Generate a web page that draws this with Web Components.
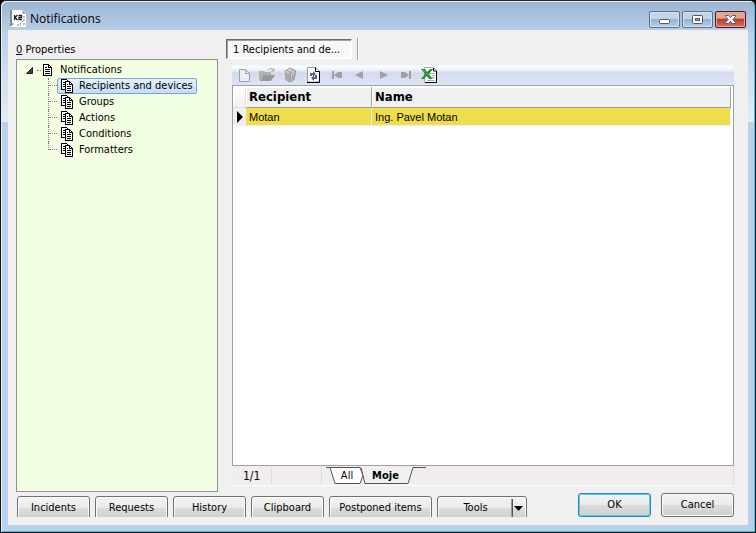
<!DOCTYPE html>
<html lang="en">
<head>
<meta charset="utf-8">
<title>Notifications</title>
<style>
    body {
        margin: 0;
        background: #000;
        color: #000;
        font: 11px/16px "DejaVu Sans Condensed", "Open Sans", sans-serif;
    }
</style>
</head>
<body>
<app-window caption="Notifications">
    <tree-panel slot="side" heading="Properties" hotkey="0">
        <tree-root label="Notifications">
            <tree-item label="Recipients and devices" selected></tree-item>
            <tree-item label="Groups"></tree-item>
            <tree-item label="Actions"></tree-item>
            <tree-item label="Conditions"></tree-item>
            <tree-item label="Formatters"></tree-item>
        </tree-root>
    </tree-panel>
    <page-panel slot="main" tab="1 Recipients and de...">
        <tool-bar></tool-bar>
        <record-grid></record-grid>
        <filter-bar position="1/1"></filter-bar>
    </page-panel>
    <push-button slot="actions">Incidents</push-button>
    <push-button slot="actions">Requests</push-button>
    <push-button slot="actions">History</push-button>
    <push-button slot="actions">Clipboard</push-button>
    <push-button slot="actions" size="wide">Postponed items</push-button>
    <push-button slot="actions" size="menu" menu>Tools</push-button>
    <push-button slot="answers" primary>OK</push-button>
    <push-button slot="answers">Cancel</push-button>
</app-window>

<script>
const ICONS = {
    app: `<svg width="16" height="17" viewBox="0 0 16 17">
        <path d="M1 0h11l4 4v13H1z" fill="#fff"/><path d="M0 0h2v16H0z" fill="#8b8b8b"/>
        <path d="M12 0l4 4h-4z" fill="#ccc"/>
        <path d="M4.500 5v5M7.500 5L5 7.500l2.500 2.500M8.500 5.500h3v2h-2.500v2h3" fill="none" stroke="#222" stroke-width="1.300"/>
        <path d="M14 6v5M13 11l-3 3M2 14h3M7 15h4M13 14h2M13 2l2 2" fill="none" stroke="#777" stroke-dasharray="2 1"/></svg>`,
    page: `<svg width="10" height="12" viewBox="0 0 10 12" shape-rendering="crispEdges">
        <path d="M.5.5h5l3 3v8h-8z" fill="#fff" stroke="#000"/><path d="M5.500 0v3.500H9" fill="none" stroke="#000"/>
        <path d="M2 3.500h2M2 5.500h5M2 7.500h5M2 9.500h5" stroke="#000"/></svg>`,
    pages: `<svg width="13" height="14" viewBox="0 0 13 14" shape-rendering="crispEdges">
        <path d="M.5.5h5l2 2v8h-7z" fill="#fff" stroke="#000"/><path d="M2 3.500h2M2 5.500h2M2 7.500h2" stroke="#000"/>
        <path d="M4.500 2.500h4l3 3v8h-7z" fill="#fff" stroke="#000"/><path d="M8.500 2v3.500H12" fill="none" stroke="#000"/>
        <path d="M6 5.500h1M6 7.500h4M6 9.500h4M6 11.500h4" stroke="#000"/></svg>`,
    create: `<svg width="16" height="16" viewBox="0 0 16 16"><path d="M3.500 2.500h6l4 4v8h-10z" fill="#e9edf6" stroke="#a0a0a0"/>
        <path d="M9.500 2.500v4h4" fill="none" stroke="#a0a0a0"/></svg>`,
    open: `<svg width="16" height="16" viewBox="0 0 16 16"><path d="M0 4h5l1 1h6v3H4l-3 5H0z" fill="#b0b0b0"/>
        <path d="M4 8h12l-4 6H1z" fill="#989898"/><path d="M9 3c2-2 4-2 5 0M15 1v3h-3" fill="none" stroke="#a0a0a0"/></svg>`,
    remove: `<svg width="16" height="16" viewBox="0 0 16 16"><path d="M3 4l5-3 6 3-2 9-4 2-4-2z" fill="#d0d2d8" stroke="#a0a0a0"/>
        <path d="M3 5l5 2v8l-4-2z" fill="#aaa"/><path d="M8 7l6-3M5 3l3 3M11 2L8 6M11 7l-1 6M13 6l-2 7M8.500 7v8" stroke="#999"/></svg>`,
    refresh: `<svg width="16" height="16" viewBox="0 0 16 16"><path d="M2.500.5h8l4 4v10.500h-12z" fill="#fff" stroke="#999"/>
        <path d="M10.500.5v4h4v11H2" fill="none" stroke="#000"/>
        <path d="M5 9V6h3V4l3 3-3 3V8H7v1z" fill="#596389"/>
        <path d="M12 8v4H9v2l-3-3 3-3v2h1V8z" fill="#596389"/></svg>`,
    first: `<svg width="16" height="16" viewBox="0 0 16 16"><path d="M4 4h2v8H4zM6 8l4-3h4v6h-4z" fill="#a0a0a0"/></svg>`,
    prev: `<svg width="16" height="16" viewBox="0 0 16 16"><path d="M4 8l8-4v8z" fill="#a0a0a0"/></svg>`,
    next: `<svg width="16" height="16" viewBox="0 0 16 16"><path d="M14 8L6 4v8z" fill="#a0a0a0"/></svg>`,
    last: `<svg width="16" height="16" viewBox="0 0 16 16"><path d="M14 4h-2v8h2zM12 8L8 5H4v6h4z" fill="#a0a0a0"/></svg>`,
    excel: `<svg width="17" height="16" viewBox="0 0 17 16"><path d="M4.500.5h9l3 3v12h-12z" fill="#fff" stroke="#aaa"/>
        <path d="M13.500 1v3h3v11.500H5" fill="none" stroke="#000"/>
        <path d="M10 6.500h5M12 8.500h3M12 10.500h3M7 13.500h8" stroke="#aaa"/>
        <path d="M1 2h4l2 3 3-3h3L9 7l4 5H9L6.500 9 4 12H1l4-5z" fill="#278b36"/><path d="M3 3l8 8" stroke="#8ccf8e" stroke-dasharray="1 1"/></svg>`,
    minimize: `<svg width="13" height="11" viewBox="0 0 13 11"><rect x="1.500" y="5.500" width="10" height="4" rx="1" fill="#fff" stroke="#535666"/></svg>`,
    maximize: `<svg width="13" height="11" viewBox="0 0 13 11"><rect x="1.500" y="1.500" width="10" height="8" rx="1" fill="#fff" stroke="#535666"/>
        <rect x="4.500" y="4.500" width="4" height="2" fill="#8faccb" stroke="#535666"/></svg>`,
    close: `<svg width="13" height="11" viewBox="0 0 13 11"><path d="M1.500 1.500h3l2 2 2-2h3v1l-2.500 3 2.500 3v1h-3l-2-2-2 2h-3v-1L4 5.500l-2.500-3z" fill="#fff" stroke="#535666"/></svg>`
};

class BaseElement extends HTMLElement {
    constructor() {
        super();
        this.attachShadow({ mode: 'open' });
    }

    connectedCallback() {
        this.shadowRoot.innerHTML = this.render();
    }
}

class AppWindow extends BaseElement {
    render() {
        const caption = this.getAttribute('caption');
        return `
            <style>
                :host {
                    display: flex;
                    flex-direction: column;
                    box-sizing: border-box;
                    min-height: 100vh;
                    padding: 0 7px 7px 7px;
                    border: 1px solid #101318;
                    border-top-color: #2b2226;
                    border-radius: 6px 6px 0 0;
                    background:
                        linear-gradient(#9ab4d1, #b7cfe9) 0 0 / 100% 30px no-repeat,
                        linear-gradient(#b9d1ea, #e2edf8) 0 30px / 100% 91px no-repeat,
                        #b9d1ea;
                    box-shadow: inset 1px 1px #e8f2fb, inset -1px -1px #35c9e8;
                }
                header {
                    display: flex;
                    align-items: center;
                    height: 29px;
                    gap: 4px;
                    padding: 0 2px;
                }
                header svg { flex: none; margin-top: 6px; }
                h1 {
                    flex: 1;
                    margin: 6px 0 0;
                    font: 12px/18px "Open Sans", "Noto Sans", sans-serif;
                }
                .controls { display: flex; gap: 2px; margin: 7px 0 0; }
                .controls button {
                    display: flex;
                    align-items: center;
                    justify-content: center;
                    width: 31px;
                    height: 17px;
                    padding: 0;
                    border: 1px solid #5b6f8e;
                    border-radius: 2px;
                    background: linear-gradient(#c1d4e8 0 45%, #97b2ce 50%, #b8d0e8);
                    box-shadow: inset 0 0 0 1px #d5e3f1;
                }
                .controls svg { margin: 0; }
                .controls .close {
                    border-color: #4b1626;
                    background: linear-gradient(#dfa595 0 40%, #b93d27 50%, #d17660);
                    box-shadow: inset 0 0 0 1px #e2aa9d;
                }
                .client {
                    flex: 1;
                    display: flex;
                    flex-direction: column;
                    background: #f0f0f0;
                }
                main {
                    flex: 1;
                    display: flex;
                    gap: 8px;
                    padding: 0 14px 0 8px;
                }
                slot[name="main"] { display: flex; flex: 1; min-width: 0; }
                footer {
                    display: flex;
                    justify-content: space-between;
                    align-items: flex-start;
                    gap: 8px;
                    height: 33px;
                    padding: 0 14px 0 9px;
                }
                .actions { display: flex; gap: 5px; padding-top: 4px; height: 21px; overflow: hidden; }
                .answers { display: flex; gap: 10px; padding-top: 1px; }
            </style>
            <header>
                ${ICONS.app}
                <h1>${caption}</h1>
                <div class="controls">
                    <button aria-label="Minimize">${ICONS.minimize}</button>
                    <button aria-label="Maximize">${ICONS.maximize}</button>
                    <button class="close" aria-label="Close">${ICONS.close}</button>
                </div>
            </header>
            <div class="client">
                <main>
                    <slot name="side"></slot>
                    <slot name="main"></slot>
                </main>
                <footer>
                    <div class="actions"><slot name="actions"></slot></div>
                    <div class="answers"><slot name="answers"></slot></div>
                </footer>
            </div>
        `;
    }
}

class TreePanel extends BaseElement {
    render() {
        return `
            <style>
                :host { display: flex; flex-direction: column; flex: 0 0 202px; }
                h2 { margin: 0; padding: 12px 0 1px; font: inherit; }
                .box {
                    flex: 1;
                    border: 1px solid #8e9094;
                    background: #f3ffe3;
                    padding: 2px 0 0;
                }
            </style>
            <h2><u>${this.getAttribute('hotkey')}</u> ${this.getAttribute('heading')}</h2>
            <div class="box" role="tree"><slot></slot></div>
        `;
    }
}

class TreeRoot extends BaseElement {
    render() {
        return `
            <style>
                :host { display: block; }
                .row { display: flex; align-items: center; height: 16px; padding-left: 9px; }
                .arrow { flex: none; margin-right: 4px; }
                .dots { width: 4px; border-top: 1px dotted #808080; margin-right: 2px; }
                span { padding-left: 7px; }
                .children { padding-left: 31px; }
            </style>
            <div class="row">
                <svg class="arrow" width="7" height="7" viewBox="0 0 7 7"><path d="M6.500.5v6h-6z" fill="#404040" stroke="#222"/></svg>
                <i class="dots"></i>
                ${ICONS.page}
                <span>${this.getAttribute('label')}</span>
            </div>
            <div class="children" role="group"><slot></slot></div>
        `;
    }
}

class TreeItem extends BaseElement {
    render() {
        return `
            <style>
                :host { display: flex; height: 16px; }
                .line { width: 8px; border-left: 1px dotted #808080; }
                .line::before {
                    content: "";
                    display: block;
                    height: 7px;
                    border-bottom: 1px dotted #808080;
                }
                :host(:last-child) .line { height: 8px; }
                .node {
                    display: flex;
                    align-items: center;
                    box-sizing: border-box;
                    height: 16px;
                    gap: 5px;
                    padding: 0 3px;
                    border: 1px solid transparent;
                    border-radius: 2px;
                }
                :host([selected]) .node {
                    border-color: #7da2ce;
                    background: linear-gradient(#e6f1fc, #c5dcf8);
                }
            </style>
            <i class="line"></i>
            <div class="node" role="treeitem">${ICONS.pages}<span>${this.getAttribute('label')}</span></div>
        `;
    }
}

class PagePanel extends BaseElement {
    render() {
        return `
            <style>
                :host { display: flex; flex-direction: column; flex: 1; min-width: 0; padding-bottom: 6px; }
                .tabs { display: flex; gap: 5px; padding: 8px 0 5px; }
                .tabs button {
                    width: 126px;
                    height: 20px;
                    margin: 1px 0;
                    padding: 1px 0 0 6px;
                    border: 1px solid;
                    border-color: #696969 #fff #fff #696969;
                    box-shadow: inset 1px 1px #a0a0a0;
                    background: repeating-conic-gradient(#fff 0 25%, #f0f0f0 0 50%) 0 0 / 2px 2px;
                    font: inherit;
                    color: inherit;
                    text-align: left;
                    white-space: nowrap;
                }
                .tabs i { width: 1px; background: #a0a0a0; border-right: 1px solid #fff; }
                .content { flex: 1; display: flex; flex-direction: column; padding-left: 6px; }
            </style>
            <div class="tabs"><button role="tab">${this.getAttribute('tab')}</button><i></i></div>
            <div class="content"><slot></slot></div>
        `;
    }
}

class ToolBar extends BaseElement {
    render() {
        const names = ['create', 'open', 'remove', 'refresh', 'first', 'prev', 'next', 'last', 'excel'];
        const buttons = names.map(name => `<button aria-label="${name}">${ICONS[name]}</button>`).join('');
        return `
            <style>
                :host {
                    display: flex;
                    align-items: center;
                    height: 20px;
                    gap: 7px;
                    padding-left: 4px;
                    background: linear-gradient(#f6f9fd 0 15%, #e4eaf6 30%, #d3daee 40%, #dfe5f8);
                }
                button { width: 16px; height: 16px; padding: 0; border: 0; background: none; }
                svg { display: block; }
            </style>
            ${buttons}
        `;
    }
}

class RecordGrid extends BaseElement {
    render() {
        return `
            <style>
                :host {
                    display: block;
                    flex: 1;
                    padding: 1px 2px 0 0;
                    border: 1px solid #a0a0a0;
                    background: #fff;
                }
                table { width: 100%; border-collapse: separate; border-spacing: 0; table-layout: fixed; }
                .mark { width: 13px; }
                .recipient { width: 126px; }
                th {
                    height: 21px;
                    box-sizing: border-box;
                    padding: 0 3px;
                    border-right: 1px solid #a0a0a0;
                    border-bottom: 1px solid #a0a0a0;
                    background: #f0f0f0;
                    box-shadow: inset 1px 1px #fff;
                    font: bold 13px/18px "DejaVu Sans Condensed", sans-serif;
                    text-align: left;
                }
                th.mark { padding: 0; border-color: #e0e0e0; background: linear-gradient(#fff, #f0f0f0); }
                td {
                    height: 18px;
                    box-sizing: border-box;
                    padding: 0 3px;
                    border-right: 1px solid #f0f0f0;
                    border-bottom: 1px solid #f0f0f0;
                    background: #f0dd4c;
                    font: 11px/16px "Liberation Sans", Arial, sans-serif;
                }
                td.mark { padding: 0 0 0 4px; background: #f0f0f0; }
                svg { display: block; }
            </style>
            <table>
                <thead><tr><th class="mark"></th><th class="recipient">Recipient</th><th>Name</th></tr></thead>
                <tbody><tr>
                    <td class="mark"><svg width="6" height="12" viewBox="0 0 6 12"><path d="M0 0l6 6-6 6z"/></svg></td>
                    <td>Motan</td><td>Ing. Pavel Motan</td>
                </tr></tbody>
            </table>
        `;
    }
}

class FilterBar extends BaseElement {
    render() {
        return `
            <style>
                :host {
                    display: flex;
                    height: 18px;
                    padding-top: 1px;
                    border-bottom: 1px solid #fff;
                    border-right: 1px solid #ddd;
                    background: #f0edec;
                }
                .cell { box-sizing: border-box; border-right: 1px solid #ddd; }
                .position { width: 40px; padding-left: 11px; font-size: 12px; line-height: 18px; }
                .empty { width: 50px; }
                .tabs { display: flex; padding-left: 4px; }
                /* the slanted outlines lie behind the captions */
                button {
                    position: relative;
                    height: 17px;
                    padding: 0;
                    border: 0;
                    background: none;
                    font: inherit;
                    color: inherit;
                }
                button svg { position: absolute; left: 0; top: 0; }
                button span { position: relative; }
                .all { width: 34px; padding-left: 8px; }
                .mine { width: 62px; font-weight: bold; padding-right: 11px; }
            </style>
            <div class="cell position">${this.getAttribute('position')}</div>
            <div class="cell empty"></div>
            <div class="tabs">
                <button class="all">
                    <svg width="40" height="17" viewBox="0 0 40 17"><path d="M3.500.5l6 16h24l4-8-3-8z" fill="#fff"/><path d="M0 .5h4l5 16h25l3-8-3-8z" fill="none" stroke="#555"/></svg>
                    <span>All</span>
                </button>
                <button class="mine">
                    <svg width="66" height="17" viewBox="0 0 66 17"><path d="M1 .5h52l-5 16H5z" fill="#f0f0f0"/><path d="M1 .5l4 16h43l5-16h13" fill="none" stroke="#555"/></svg>
                    <span>Moje</span>
                </button>
            </div>
        `;
    }
}

class PushButton extends BaseElement {
    render() {
        const menu = this.hasAttribute('menu')
            ? '<i></i><svg width="9" height="5" viewBox="0 0 9 5"><path d="M0 0h9L4.500 5z"/></svg>'
            : '';
        return `
            <style>
                :host { display: block; width: 73px; }
                :host([size="wide"]) { width: 103px; }
                :host([size="menu"]) { width: 90px; }
                button {
                    display: flex;
                    align-items: center;
                    width: 100%;
                    height: 24px;
                    padding: 0 2px;
                    border: 1px solid #707070;
                    border-radius: 3px;
                    background: linear-gradient(#f3f3f3, #ebebeb 50%, #dcdcdc 50%, #cfcfcf);
                    box-shadow: inset 0 0 0 1px #fbfbfb;
                    font: inherit;
                    color: inherit;
                    white-space: nowrap;
                }
                span { flex: 1; text-align: center; }
                i { width: 1px; height: 18px; margin-right: 1px; background: #555; border-left: 1px solid #999; }
                svg { margin-right: 1px; }
                :host([primary]) button {
                    border-color: #3c7fb1;
                    box-shadow: inset 0 0 0 1px #48d3f5;
                }
            </style>
            <button type="button"><span><slot></slot></span>${menu}</button>
        `;
    }
}

customElements.define('app-window', AppWindow);
customElements.define('tree-panel', TreePanel);
customElements.define('tree-root', TreeRoot);
customElements.define('tree-item', TreeItem);
customElements.define('page-panel', PagePanel);
customElements.define('tool-bar', ToolBar);
customElements.define('record-grid', RecordGrid);
customElements.define('filter-bar', FilterBar);
customElements.define('push-button', PushButton);
</script>
</body>
</html>
